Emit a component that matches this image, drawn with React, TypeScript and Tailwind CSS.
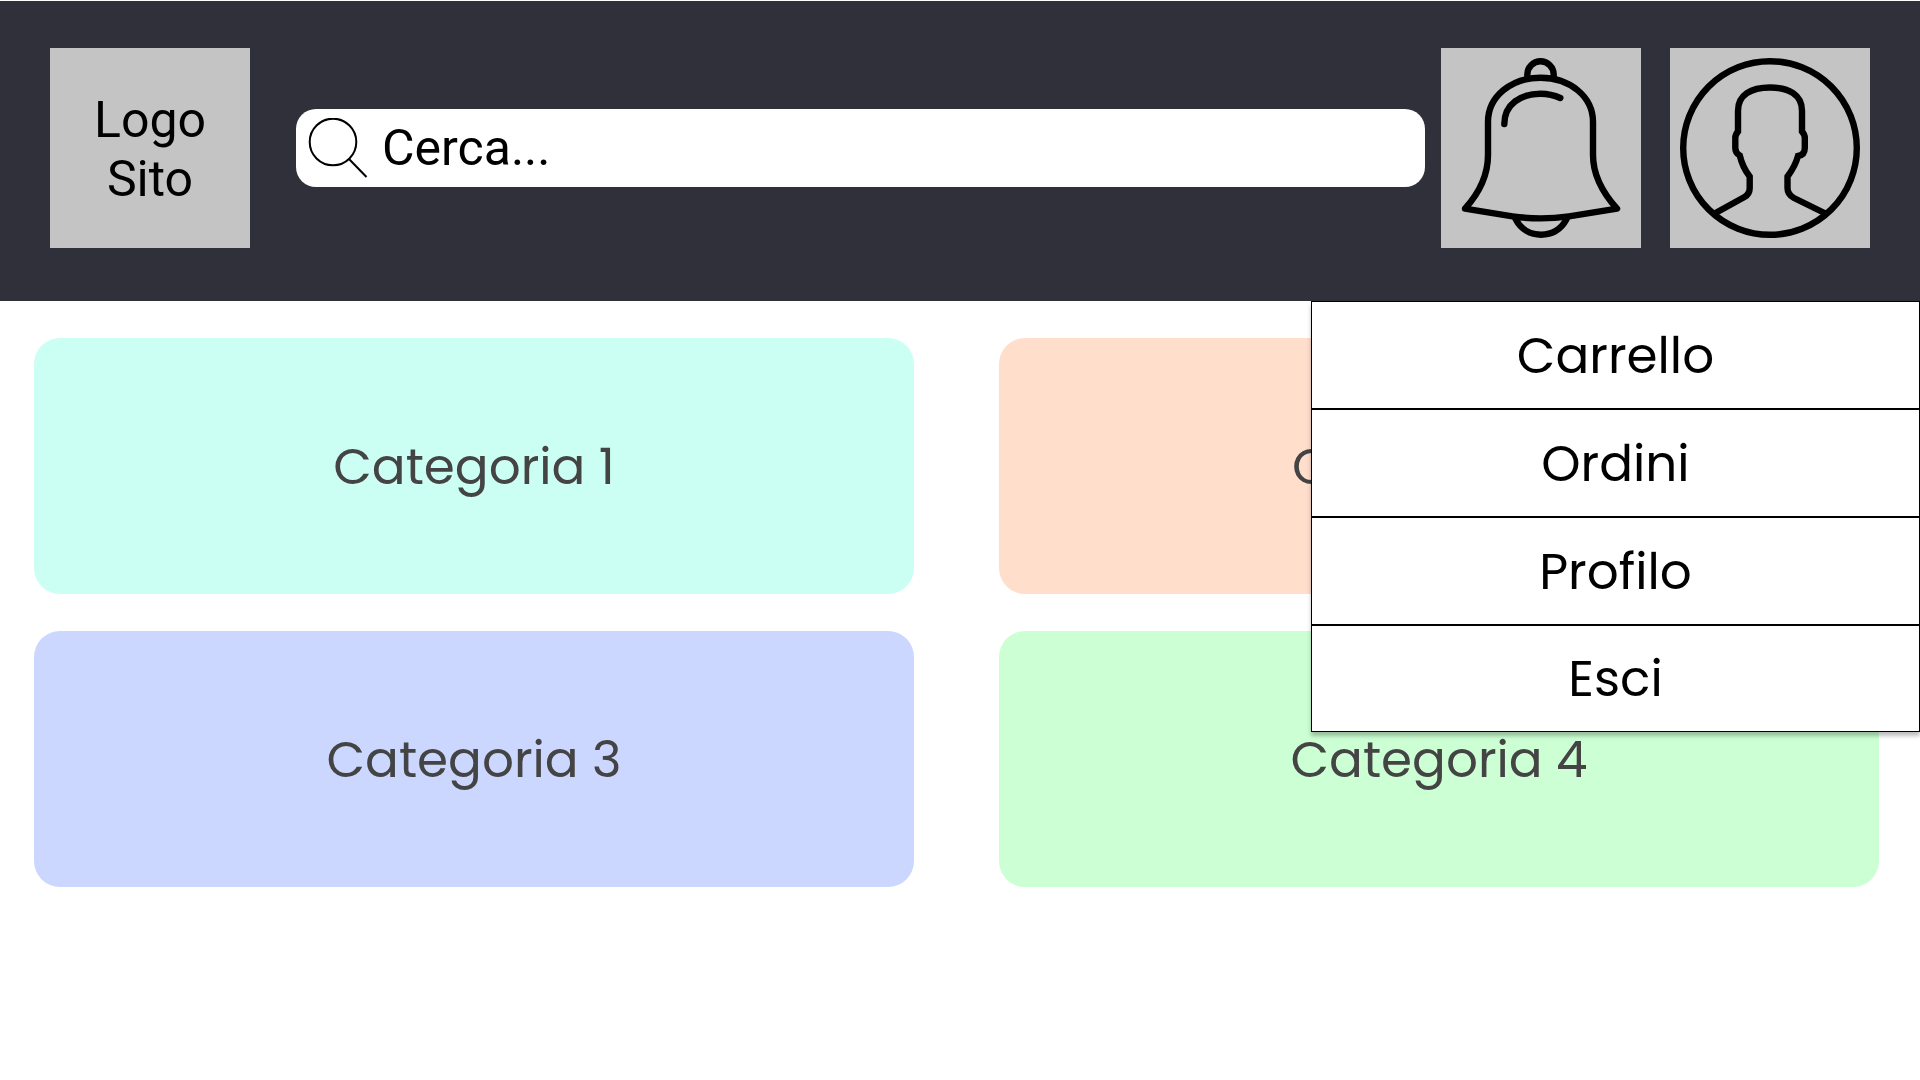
const categories = [
  { name: "Categoria 1", color: "bg-[#ccfff3]" },
  { name: "Categoria 2", color: "bg-[#ffdecc]" },
  { name: "Categoria 3", color: "bg-[#ccd7ff]" },
  { name: "Categoria 4", color: "bg-[#ccffd3]" },
];

const menuItems = ["Carrello", "Ordini", "Profilo", "Esci"];

function SearchIcon() {
  return (
    <svg viewBox="0 0 60 60" className="size-[60px] shrink-0" fill="none" stroke="currentColor" strokeWidth="2" aria-hidden="true">
      <circle cx="25" cy="24" r="23.3" />
      <path d="M41 41L58.5 59" />
    </svg>
  );
}

function BellIcon() {
  return (
    <svg viewBox="0 0 200 200" className="size-full" fill="none" stroke="currentColor" strokeWidth="6.4" strokeLinecap="round" strokeLinejoin="round" aria-hidden="true">
      <path d="M86.3 28.5V26.5a13.2 13.2 0 0 1 26.4 0V28.5" />
      <path d="M24 160.7C40 143 47 126 47 107V74C47 48 71 29.7 99.6 29.7S152 48 152 74V107C152 126 160 143 176 160.7L128 168.3Q99.7 172.5 71.5 168.3Z" />
      <path d="M63.3 76C63.3 56 80 45.7 99.6 45.7Q110 45.7 119.3 50" />
      <path d="M74.7 171.3C80 181.5 89.5 186.7 100 186.7S120 181.5 125.5 171.3" />
    </svg>
  );
}

function UserIcon() {
  return (
    <svg viewBox="0 0 200 200" className="size-full" fill="none" stroke="currentColor" strokeWidth="6.4" aria-hidden="true">
      <circle cx="100" cy="100" r="86.8" />
      <path d="M45.5 165L74.5 149Q79.7 146 79.7 140V128.5C75 122.5 71.5 115 69.8 107.5Q65.3 105 65.3 100V90Q65.3 86.5 68 83.5V62.7C68 47 81 39.5 100 39.5S132 47 132 62.7V83.5Q134.8 86.5 134.8 90V100Q134.8 107 128 108C126 115.5 122 122.5 117.5 128.5V140Q117.5 146.5 124 150L155.5 165.5" />
    </svg>
  );
}

export default function App() {
  return (
    <div className="min-h-screen bg-white text-[50px] font-normal text-black">
      <header className="relative z-10 flex items-center border-t border-white bg-[#30303a] px-[50px] pt-[47px] pb-[53px] font-[Roboto,sans-serif] leading-[59px]">
        <a href="#" className="flex size-[200px] shrink-0 items-center justify-center bg-[#c4c4c4] px-8 pt-1 text-center">
          Logo Sito
        </a>
        <label className="mr-4 ml-[46px] flex h-[78px] min-w-0 flex-1 items-center gap-[14px] rounded-[20px] bg-white px-3">
          <SearchIcon />
          <input
            type="text"
            aria-label="Cerca"
            placeholder="Cerca..."
            className="h-[59px] min-w-0 flex-1 outline-none placeholder:text-black placeholder:opacity-100"
          />
        </label>
        <div className="flex shrink-0 gap-[29px]">
          <button type="button" aria-label="Notifiche" className="size-[200px] bg-[#c4c4c4]">
            <BellIcon />
          </button>
          <button type="button" aria-label="Menu utente" className="size-[200px] bg-[#c4c4c4]">
            <UserIcon />
          </button>
        </div>
        <nav className="absolute top-full right-0 w-[609px] divide-y-2 divide-black border border-black bg-white font-[Poppins,Inter,sans-serif] shadow-[0_4px_4px_rgba(0,0,0,0.25)]">
          {menuItems.map((item) => (
            <a key={item} href="#" className="flex h-[108px] items-center justify-center last:h-[105px]">
              {item}
            </a>
          ))}
        </nav>
      </header>
      <main className="grid grid-cols-2 gap-x-[85px] gap-y-[37px] pt-[37px] pr-[41px] pl-[34px] font-[Poppins,Inter,sans-serif] text-[#444444]">
        {categories.map(({ name, color }) => (
          <a key={name} href="#" className={`flex h-64 items-center justify-center rounded-[26px] ${color}`}>
            {name}
          </a>
        ))}
      </main>
    </div>
  );
}
